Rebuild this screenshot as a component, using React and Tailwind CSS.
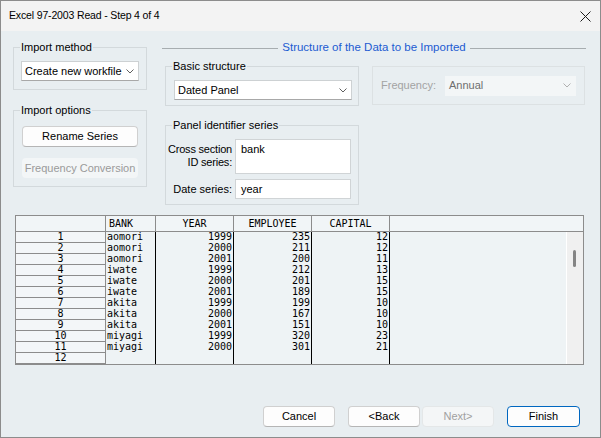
import React from 'react';

// sample panel data shown in the preview grid
const rows = [
  ['aomori', '1999', '235', '12'],
  ['aomori', '2000', '211', '12'],
  ['aomori', '2001', '200', '11'],
  ['iwate', '1999', '212', '13'],
  ['iwate', '2000', '201', '15'],
  ['iwate', '2001', '189', '15'],
  ['akita', '1999', '199', '10'],
  ['akita', '2000', '167', '10'],
  ['akita', '2001', '151', '10'],
  ['miyagi', '1999', '320', '23'],
  ['miyagi', '2000', '301', '21'],
  ['', '', '', ''],
];

function Chevron({ color = '#5f5f5f' }) {
  return (
    <svg width="8" height="5" viewBox="0 0 8 5">
      <polyline points="0.5,0.5 4,4 7.5,0.5" fill="none" stroke={color} strokeWidth="1" />
    </svg>
  );
}

function Combo({ text, className, disabled }) {
  return (
    <div
      className={
        disabled
          ? 'flex items-center justify-between h-[20px] pl-[4px] pr-[5px] bg-[#f3f6f7] text-[#6e6e6e] ' + className
          : 'flex items-center justify-between h-[20px] pl-[3px] pr-[4px] bg-white border border-[#cdd1d3] border-b-[#a8a8a8] ' + className
      }
    >
      <span>{text}</span>
      <Chevron color={disabled ? '#b0b0b0' : '#5f5f5f'} />
    </div>
  );
}

function GroupBox({ label, className, children }) {
  return (
    <div className={'relative border border-[#d3d9dc] ' + className}>
      {label && (
        <span className="absolute -top-[8px] left-[6px] px-[1px] bg-[#e8eef1] leading-[14px]">{label}</span>
      )}
      {children}
    </div>
  );
}

function Button({ children, className, disabled, primary }) {
  let cls = 'flex items-center justify-center h-[21px] rounded-[4px] ';
  if (disabled) cls += 'bg-[#f4f6f7] border border-[#e4e7e8] text-[#a0a0a0] ';
  else if (primary) cls += 'bg-[#fdfdfd] border border-[#0067c0] text-black ';
  else cls += 'bg-[#fdfdfd] border border-[#d0d0d0] border-b-[#b5b5b5] text-black ';
  return <div className={cls + className}>{children}</div>;
}

export default function App() {
  return (
    <div className="w-[601px] h-[438px] border border-[#8c8c8c] bg-[#e8eef1] flex flex-col text-[11px] text-black font-['Liberation_Sans',Arial,sans-serif] overflow-hidden">
      {/* title bar */}
      <div className="h-[30px] bg-[#f3f3f3] flex items-center justify-between pl-[8px] pr-[9px] shrink-0">
        <span className="text-[10.5px] tracking-[-0.15px]">Excel 97-2003 Read - Step 4 of 4</span>
        <svg width="11" height="11" viewBox="0 0 11 11">
          <path d="M0.5 0.5 L10.5 10.5 M10.5 0.5 L0.5 10.5" stroke="#1c1c1c" strokeWidth="1" />
        </svg>
      </div>

      {/* options area */}
      <div className="h-[184px] flex pl-[12px] shrink-0">
        <div className="w-[134px] flex flex-col">
          <GroupBox label="Import method" className="mt-[16px] h-[43px] pt-[13px] pl-[7px]">
            <Combo text="Create new workfile" className="w-[118px]" />
          </GroupBox>
          <GroupBox label="Import options" className="mt-[20px] h-[77px] pt-[15px] pl-[8px] flex flex-col gap-[11px]">
            <Button className="w-[116px] h-[20px]">Rename Series</Button>
            <div className="w-[116px] h-[20px] rounded-[4px] bg-[#f3f6f7] text-[#9a9a9a] flex items-center justify-center">
              Frequency Conversion
            </div>
          </GroupBox>
        </div>

        <div className="ml-[15px] w-[424px] flex flex-col">
          <div className="mt-[10px] h-[14px] flex items-center">
            <div className="flex-1 h-px bg-[#a7adb0]" />
            <span className="px-[4px] text-[#1c5bd2] text-[11.5px]">Structure of the Data to be Imported</span>
            <div className="flex-1 h-px bg-[#a7adb0]" />
          </div>

          <div className="mt-[11px] flex pl-[3px]">
            <GroupBox label="Basic structure" className="w-[194px] h-[40px] pt-[13px] pl-[8px]">
              <Combo text="Dated Panel" className="w-[178px]" />
            </GroupBox>
            <div className="ml-[13px] w-[213px] h-[39px] border border-[#dce1e3] flex items-center pl-[8px] text-[#a3a3a3]">
              <span className="w-[64px]">Frequency:</span>
              <Combo text="Annual" className="w-[131px] h-[19px]" disabled />
            </div>
          </div>

          <GroupBox label="Panel identifier series" className="mt-[19px] ml-[3px] w-[194px] h-[80px] pt-[13px]">
            <div className="flex">
              <div className="w-[66px] flex flex-col items-end whitespace-nowrap leading-[12.5px] pt-[4px] tracking-[-0.2px]">
                <span>Cross section</span>
                <span>ID series:</span>
              </div>
              <div className="ml-[3px] w-[116px] h-[35px] bg-white border border-[#d0d4d6] pl-[5px] pt-[1px]">bank</div>
            </div>
            <div className="flex items-center mt-[5px]">
              <div className="w-[66px] text-right whitespace-nowrap">Date series:</div>
              <div className="ml-[3px] w-[116px] h-[20px] bg-white border border-[#d0d4d6] pl-[5px] flex items-center">year</div>
            </div>
          </GroupBox>
        </div>
      </div>

      {/* preview grid */}
      <div className="ml-[14px] w-[569px] h-[150px] shrink-0 border border-[#8c8c8c] bg-[#eef3f5] flex flex-col font-['DejaVu_Sans_Mono',monospace] text-[10px] leading-[10px]">
        <div className="flex h-[16px] border-b border-[#8c8c8c] bg-[#f1f5f7]">
          <div className="w-[90px] border-r border-[#8c8c8c]" />
          <div className="w-[50px] border-r border-[#8c8c8c] pl-[3px] flex items-center">BANK</div>
          <div className="w-[78px] border-r border-[#8c8c8c] flex items-center justify-center">YEAR</div>
          <div className="w-[78px] border-r border-[#8c8c8c] flex items-center justify-center">EMPLOYEE</div>
          <div className="w-[78px] border-r border-[#8c8c8c] flex items-center justify-center">CAPITAL</div>
          <div className="flex-1" />
        </div>
        <div className="flex flex-1">
          <div className="flex-1 flex flex-col">
            {rows.map((r, i) => (
              <div key={i} className="flex h-[11px]">
                <div className="w-[90px] border-r border-[#8c8c8c] border-b border-b-[#8c8c8c] bg-[#f3f6f8] text-center">
                  {i + 1}
                </div>
                <div className="w-[50px] border-r border-black pl-[1px]">{r[0]}</div>
                <div className="w-[78px] border-r border-black text-right pr-[1px]">{r[1]}</div>
                <div className="w-[78px] border-r border-black text-right pr-[1px]">{r[2]}</div>
                <div className="w-[78px] border-r border-black text-right pr-[1px]">{r[3]}</div>
                <div className="flex-1" />
              </div>
            ))}
          </div>
          <div className="w-[17px] bg-[#f0f0f0] border-l border-white relative">
            <div className="absolute left-[6px] top-[18px] w-[3px] h-[17px] rounded-full bg-[#858585]" />
          </div>
        </div>
      </div>

      {/* wizard buttons */}
      <div className="mt-[41px] flex justify-end pr-[20px]">
        <Button className="w-[72px]">Cancel</Button>
        <Button className="w-[72px] ml-[13px]">&lt;Back</Button>
        <Button className="w-[72px] ml-[2px]" disabled>Next&gt;</Button>
        <Button className="w-[73px] ml-[13px]" primary>Finish</Button>
      </div>
    </div>
  );
}
